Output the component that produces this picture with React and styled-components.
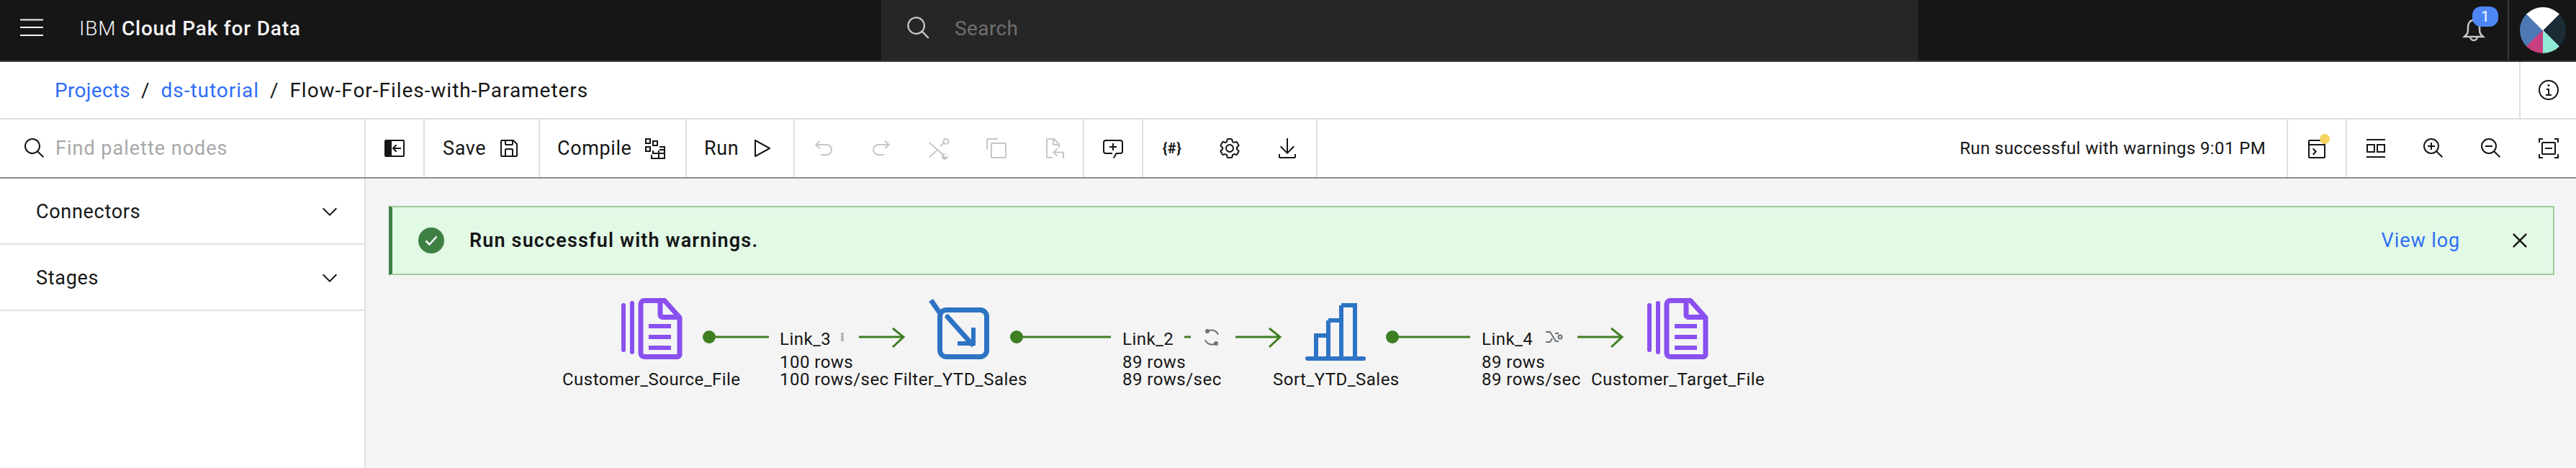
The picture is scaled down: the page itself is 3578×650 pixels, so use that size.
import React from "react";
import styled, { createGlobalStyle } from "styled-components";

const FONT = `Roboto, "Liberation Sans", sans-serif`;

const GlobalStyle = createGlobalStyle`
  html, body {
    margin: 0;
    padding: 0;
    background: #ffffff;
  }
  * {
    box-sizing: border-box;
  }
  body {
    font-family: ${FONT};
    color: #161616;
  }
`;

const ICONS = {
  menu: <path d="M0 3.5h32v2H0zM0 14h32v2H0zM0 25h32v2H0z" />,
  search: (
    <path d="M29 27.586l-7.552-7.552a11.018 11.018 0 1 0-1.414 1.414L27.586 29zM4 13a9 9 0 1 1 9 9 9.01 9.01 0 0 1-9-9z" />
  ),
  chevron: <path d="M16 22L6 12l1.4-1.4 8.6 8.6 8.6-8.6L26 12z" />,
  info: (
    <path d="M17 22v-8h-4v2h2v6h-3v2h8v-2zM16 8a1.5 1.5 0 1 0 1.5 1.5A1.5 1.5 0 0 0 16 8zM16 30a14 14 0 1 1 14-14 14 14 0 0 1-14 14zm0-26a12 12 0 1 0 12 12A12 12 0 0 0 16 4z" />
  ),
  collapse: (
    <path
      fillRule="evenodd"
      d="M4 4h24a2 2 0 0 1 2 2v20a2 2 0 0 1-2 2H4a2 2 0 0 1-2-2V6a2 2 0 0 1 2-2zm8 2v20h16V6zM18 10.6l1.4 1.4-3 3H25v2h-8.6l3 3-1.4 1.4-5.4-5.4z"
    />
  ),
  save: (
    <path d="M27.71 9.29l-5-5A1 1 0 0 0 22 4H6a2 2 0 0 0-2 2v20a2 2 0 0 0 2 2h20a2 2 0 0 0 2-2V10a1 1 0 0 0-.29-.71zM12 6h8v4h-8zm8 20h-8v-8h8zm2 0v-8a2 2 0 0 0-2-2h-8a2 2 0 0 0-2 2v8H6V6h4v4a2 2 0 0 0 2 2h8a2 2 0 0 0 2-2V6.41l4 4V26z" />
  ),
  compile: (
    <path
      fillRule="evenodd"
      d="M2 2h8v8H2zm2 2v4h4V4zM12 5h8v8h-8zm2 2v4h4V7zM2 13h8v8H2zm2 2v4h4v-4zM22 13h8v18H10v-6h2v-6h10zm-8 6v3h6v-3zm8 0v3h6v-3zm0-4v2h6v-2zm-10 12v2h8v-5h-8zm10-3v5h6v-5zm-10 0z"
    />
  ),
  play: (
    <path d="M7 28a1 1 0 0 1-1-1V5a1 1 0 0 1 1.482-.876l20 11a1 1 0 0 1 0 1.752l-20 11A1 1 0 0 1 7 28zM8 6.69v18.62L24.925 16z" />
  ),
  undo: (
    <path d="M20 10H7.815l3.587-3.586L10 5l-6 6 6 6 1.402-1.415L7.818 12H20a6 6 0 0 1 0 12h-8v2h8a8 8 0 0 0 0-16z" />
  ),
  redo: (
    <path d="M12 10h12.185l-3.587-3.586L22 5l6 6-6 6-1.402-1.415L24.182 12H12a6 6 0 0 0 0 12h8v2h-8a8 8 0 0 1 0-16z" />
  ),
  cut: (
    <path
      fillRule="evenodd"
      d="M26 2a4.5 4.5 0 1 1-2.9 7.9L18.6 14l-1.6-1.3 4.8-4.3A4.5 4.5 0 0 1 26 2zm0 2a2.5 2.5 0 1 0 0 5 2.5 2.5 0 0 0 0-5zM3.3 7.2l18.5 16.4A4.5 4.5 0 1 1 20.5 25L2 8.7zM26 23a2.5 2.5 0 1 0 0 5 2.5 2.5 0 0 0 0-5zM12.4 18.4l1.5 1.4-10.6 9.3L2 27.6z"
    />
  ),
  copy: (
    <path d="M28 10v18H10V10h18m0-2H10a2 2 0 0 0-2 2v18a2 2 0 0 0 2 2h18a2 2 0 0 0 2-2V10a2 2 0 0 0-2-2zM4 18H2V4a2 2 0 0 1 2-2h14v2H4z" />
  ),
  paste: (
    <path d="M5 2h11.4L24 10v5h-2v-3h-6a2 2 0 0 1-2-2V4H7v24h7v2H7a2 2 0 0 1-2-2V4a2 2 0 0 1 2-2zm11 2.8V10h5zM20 15.6l1.4 1.4-3.6 3.6H28a2 2 0 0 1 2 2V30h-2v-7.4H17.8l3.6 3.6L20 27.6 14 21.6z" />
  ),
  comment: (
    <path d="M17.74 30L16 29l4-7h6a2 2 0 0 0 2-2V8a2 2 0 0 0-2-2H6a2 2 0 0 0-2 2v12a2 2 0 0 0 2 2h9v2H6a4 4 0 0 1-4-4V8a4 4 0 0 1 4-4h20a4 4 0 0 1 4 4v12a4 4 0 0 1-4 4h-4.84zM17 9h-2v4h-4v2h4v4h2v-4h4v-2h-4z" />
  ),
  settings: (
    <path d="M27 16.76c0-.25 0-.5 0-.76s0-.51 0-.77l1.92-1.68A2 2 0 0 0 29.3 11l-2.36-4a2 2 0 0 0-1.73-1 2 2 0 0 0-.64.1l-2.43.82a11.35 11.35 0 0 0-1.31-.75l-.51-2.52a2 2 0 0 0-2-1.61h-4.68a2 2 0 0 0-2 1.61l-.51 2.52a11.48 11.48 0 0 0-1.32.75l-2.38-.86A2 2 0 0 0 6.79 6a2 2 0 0 0-1.73 1L2.7 11a2 2 0 0 0 .41 2.51L5 15.24c0 .25 0 .5 0 .76s0 .51 0 .77l-1.89 1.68A2 2 0 0 0 2.7 21l2.36 4a2 2 0 0 0 1.73 1 2 2 0 0 0 .64-.1l2.43-.82a11.35 11.35 0 0 0 1.31.75l.51 2.52a2 2 0 0 0 2 1.61h4.72a2 2 0 0 0 2-1.61l.51-2.52a11.48 11.48 0 0 0 1.32-.75l2.42.82a2 2 0 0 0 .64.1 2 2 0 0 0 1.73-1l2.28-4a2 2 0 0 0-.41-2.51zM25.21 24l-3.43-1.16a8.86 8.86 0 0 1-2.71 1.57L18.36 28h-4.72l-.71-3.55a9.36 9.36 0 0 1-2.7-1.57L6.79 24l-2.36-4 2.72-2.4a8.9 8.9 0 0 1 0-3.13L4.43 12l2.36-4 3.43 1.16a8.86 8.86 0 0 1 2.71-1.57L13.64 4h4.72l.71 3.55a9.36 9.36 0 0 1 2.7 1.57L25.21 8l2.36 4-2.72 2.4a8.9 8.9 0 0 1 0 3.13L27.57 20zM16 22a6 6 0 1 1 6-6 5.94 5.94 0 0 1-6 6zm0-10a3.91 3.91 0 0 0-4 4 3.91 3.91 0 0 0 4 4 3.91 3.91 0 0 0 4-4 3.91 3.91 0 0 0-4-4z" />
  ),
  download: (
    <path d="M26 24v4H6v-4H4v4a2 2 0 0 0 2 2h20a2 2 0 0 0 2-2v-4zM26 14l-1.41-1.41L17 20.17V2h-2v18.17l-7.59-7.58L6 14l10 10 10-10z" />
  ),
  terminal: (
    <path
      fillRule="evenodd"
      d="M6 4h20a2 2 0 0 1 2 2v22a2 2 0 0 1-2 2H6a2 2 0 0 1-2-2V6a2 2 0 0 1 2-2zm0 2v4h20V6zm0 6v16h20V12zM10 17l1.4-1.4 4.6 4.9-4.6 4.9L10 24l3.2-3.5z"
    />
  ),
  layout: (
    <path
      fillRule="evenodd"
      d="M3 3h26v2H3zM3 27h26v2H3zM3 10h12v12H3zm2 2v8h8v-8zM17 10h12v12H17zm2 2v8h8v-8z"
    />
  ),
  zoomIn: (
    <path d="M18 12h-4V8h-2v4H8v2h4v4h2v-4h4zM21.448 20A10.856 10.856 0 0 0 24 13a11 11 0 1 0-11 11 10.856 10.856 0 0 0 7-2.552L27.586 29 29 27.586zM13 22a9 9 0 1 1 9-9 9.01 9.01 0 0 1-9 9z" />
  ),
  zoomOut: (
    <path d="M8 12h10v2H8zM21.448 20A10.856 10.856 0 0 0 24 13a11 11 0 1 0-11 11 10.856 10.856 0 0 0 7-2.552L27.586 29 29 27.586zM13 22a9 9 0 1 1 9-9 9.01 9.01 0 0 1-9 9z" />
  ),
  fit: (
    <path
      fillRule="evenodd"
      d="M2 2h6v2H4v4H2zM24 2h6v6h-2V4h-4zM2 24h2v4h4v2H2zM28 24h2v6h-6v-2h4zM8 7h16a2 2 0 0 1 2 2v14a2 2 0 0 1-2 2H8a2 2 0 0 1-2-2V9a2 2 0 0 1 2-2zm0 2v14h16V9zM11 15h10v2H11z"
    />
  ),
  close: (
    <path d="M24 9.4L22.6 8 16 14.6 9.4 8 8 9.4l6.6 6.6L8 22.6 9.4 24l6.6-6.6 6.6 6.6 1.4-1.4-6.6-6.6L24 9.4z" />
  ),
};

function Icon({ name, size = 32 }) {
  return (
    <svg width={size} height={size} viewBox="0 0 32 32" fill="currentColor" aria-hidden="true">
      {ICONS[name]}
    </svg>
  );
}

const Page = styled.div`
  width: 100%;
  height: 650px;
  overflow: hidden;
  display: flex;
  flex-direction: column;
  font-family: ${FONT};
`;

/* ---------- top bar ---------- */

const Header = styled.header`
  flex: 0 0 86px;
  display: flex;
  align-items: stretch;
  background: #161616;
  border-bottom: 2px solid #393939;
  color: #f4f4f4;
`;

const Brand = styled.div`
  flex: 0 0 1224px;
  display: flex;
  align-items: center;
  padding: 0 0 6px 28px;
  gap: 50px;
`;

const BrandName = styled.span`
  font-size: 28px;
  font-weight: 300;
  letter-spacing: 0.8px;
  b {
    font-weight: 500;
  }
`;

const HeaderSearch = styled.div`
  flex: 0 0 1440px;
  display: flex;
  align-items: center;
  gap: 32px;
  padding: 0 0 6px 34px;
  background: #262626;
  color: #c6c6c6;
`;

const HeaderSearchText = styled.span`
  font-size: 28px;
  color: #6f6f6f;
  letter-spacing: 0.4px;
`;

const HeaderRight = styled.div`
  flex: 1;
  display: flex;
  justify-content: flex-end;
`;

const Bell = styled.div`
  position: relative;
  flex: 0 0 92px;
  display: flex;
  align-items: center;
  justify-content: center;
  padding-right: 4px;
  color: #c6c6c6;
  border-right: 2px solid #393939;
`;

const Badge = styled.span`
  position: absolute;
  left: 41px;
  top: 9px;
  width: 36px;
  height: 28px;
  border-radius: 12px;
  background: #4d87f6;
  color: #ffffff;
  font-size: 21px;
  line-height: 28px;
  text-align: center;
`;

const AvatarCell = styled.div`
  flex: 0 0 93px;
  display: flex;
  align-items: center;
  padding-left: 15px;
`;

const Avatar = styled.div`
  width: 64px;
  height: 64px;
  border-radius: 50%;
  background: conic-gradient(
    #ffffff 0deg 45deg,
    #1b2c37 45deg 135deg,
    #8fe9d5 135deg 180deg,
    #c63f7f 180deg 225deg,
    #4f79b5 225deg 315deg,
    #ffffff 315deg 360deg
  );
`;

/* ---------- breadcrumb ---------- */

const BreadcrumbBar = styled.nav`
  flex: 0 0 80px;
  display: flex;
  align-items: stretch;
  justify-content: space-between;
  background: #ffffff;
  border-bottom: 2px solid #e0e0e0;
`;

const Crumbs = styled.div`
  display: flex;
  align-items: center;
  padding-left: 76px;
  font-size: 28px;
  letter-spacing: 0.96px;
`;

const CrumbLink = styled.a`
  color: #2f6df6;
  letter-spacing: ${(p) => p.$spacing || "0.96px"};
`;

const CrumbSlash = styled.span`
  margin: 0 15px;
`;

const InfoButton = styled.div`
  flex: 0 0 79px;
  display: flex;
  align-items: center;
  justify-content: center;
  border-left: 2px solid #e0e0e0;
`;

/* ---------- toolbar ---------- */

const Toolbar = styled.div`
  flex: 0 0 82px;
  display: flex;
  align-items: stretch;
  width: calc(100% + 2px);
  background: #ffffff;
  border-bottom: 2px solid #8d8d8d;
`;

const PaletteSearch = styled.div`
  flex: 0 0 508px;
  display: flex;
  align-items: center;
  padding-left: 32px;
  border-right: 2px solid #e0e0e0;
`;

const PaletteText = styled.span`
  margin-left: 13px;
  font-size: 27px;
  letter-spacing: 1px;
  color: #a8a8a8;
`;

const Group = styled.div`
  display: flex;
  align-items: stretch;
  border-right: 2px solid #e0e0e0;
`;

const IconButton = styled.div`
  flex: 0 0 80px;
  width: 80px;
  position: relative;
  display: flex;
  align-items: center;
  justify-content: center;
  color: ${(p) => (p.$disabled ? "#c6c6c6" : "#161616")};
`;

const TextButton = styled.div`
  display: flex;
  align-items: center;
  width: ${(p) => p.$width}px;
  padding-left: ${(p) => p.$pad}px;
  gap: ${(p) => p.$gap}px;
  font-size: 27px;
  letter-spacing: 0.6px;
`;

const HashGlyph = styled.span`
  font-size: 20px;
  font-weight: 700;
  letter-spacing: 0.5px;
`;

const Dot = styled.span`
  position: absolute;
  left: 44px;
  top: 20px;
  width: 14px;
  height: 14px;
  border-radius: 50%;
  background: #f6d35f;
`;

const Spacer = styled.div`
  flex: 1;
`;

const StatusText = styled.div`
  display: flex;
  align-items: center;
  padding-right: 29px;
  font-size: 24px;
  letter-spacing: 0.38px;
  border-right: 2px solid #e0e0e0;
`;

/* ---------- body ---------- */

const Body = styled.div`
  flex: 1;
  display: flex;
  min-height: 0;
`;

const Sidebar = styled.aside`
  flex: 0 0 508px;
  background: #ffffff;
  border-right: 2px solid #e0e0e0;
`;

const Section = styled.div`
  height: 92px;
  display: flex;
  align-items: center;
  justify-content: space-between;
  padding: 1px 32px 0 50px;
  font-size: 27px;
  letter-spacing: 0.7px;
  border-bottom: 2px solid #e0e0e0;
`;

const Main = styled.main`
  flex: 1;
  background: #f4f4f4;
  display: flex;
  flex-direction: column;
  min-width: 0;
`;

const Notification = styled.div`
  flex: 0 0 96px;
  margin: 38px 30px 0 32px;
  display: flex;
  align-items: center;
  background: #e2f9e6;
  border: 2px solid #9ccb9e;
  border-left: 5px solid #3e7f42;
  padding: 0 26px 0 36px;
`;

const NotificationTitle = styled.span`
  margin-left: 35px;
  font-size: 27px;
  font-weight: 600;
  letter-spacing: 1.15px;
`;

const ViewLog = styled.a`
  font-size: 27px;
  letter-spacing: 0.9px;
  color: #2f6df6;
  margin-left: auto;
  margin-right: 63px;
`;

const CloseButton = styled.div`
  display: flex;
`;

const FlowCanvas = styled.div`
  position: relative;
  flex: 1;
`;

const FlowDrawing = styled.svg`
  position: absolute;
  left: 0;
  top: 0;
`;

/* page coords minus the canvas origin (508, 382) */
const FlowText = styled.span`
  position: absolute;
  left: ${(p) => p.$x - 508}px;
  top: ${(p) => p.$y - 382}px;
  font-size: 24px;
  line-height: 28px;
  letter-spacing: 0.47px;
  white-space: nowrap;
`;

const GREEN = "#3f7f24";
const PURPLE = "#8a50f0";
const BLUE = "#2d74c4";

function FileNode({ x }) {
  return (
    <g transform={`translate(${x} 414)`} fill={PURPLE}>
      <rect x="0" y="7" width="6" height="68" rx="3" />
      <rect x="12" y="4" width="6" height="74" rx="3" />
      <path
        fill="none"
        stroke={PURPLE}
        strokeWidth="7"
        strokeLinejoin="round"
        d="M35 3.5H32a5 5 0 0 0-5 5v68a5 5 0 0 0 5 5h46a3 3 0 0 0 3-3V27L60 3.5zM54 3.5v20a3 3 0 0 0 3 3h24"
      />
      <rect x="38" y="36" width="31" height="6" />
      <rect x="38" y="51" width="31" height="6" />
      <rect x="38" y="66" width="31" height="6" />
    </g>
  );
}

function LinkLine({ from, to, tip }) {
  return (
    <g fill="none" stroke={GREEN}>
      <circle cx={from} cy="86" r="9" fill={GREEN} stroke="none" />
      <path strokeWidth="3" d={`M${from} 86H${to}`} />
      <path strokeWidth="3" d={`M${tip - 62} 86H${tip}M${tip - 15} 74L${tip} 86L${tip - 15} 100`} />
    </g>
  );
}

function FlowArt() {
  return (
    <FlowDrawing width="3070" height="268" viewBox="508 382 3070 268">
      <FileNode x={863} />
      <FileNode x={2288} />

      {/* filter node */}
      <g fill="none" stroke={BLUE} strokeWidth="7">
        <rect x="1305.5" y="430.5" width="65" height="65" rx="9" />
        <path d="M1293 417L1305 434" />
        <path strokeLinecap="round" d="M1316 440L1350 478" />
        <path strokeWidth="6" d="M1330 477H1352V455" />
      </g>

      {/* sort node */}
      <g fill="none" stroke={BLUE} strokeWidth="6">
        <path d="M1828 496V466H1845V496M1845 445H1863V496M1845 466V445M1863 424H1882V496M1863 445V424" />
        <rect x="1813" y="495" width="84" height="6" rx="3" fill={BLUE} stroke="none" />
      </g>

      {/* links, y relative to the 382 row */}
      <g transform="translate(0 382)">
        <LinkLine from={985} to={1068} tip={1255} />
        <LinkLine from={1412} to={1543} tip={1778} />
        <LinkLine from={1934} to={2042} tip={2253} />
        <path d="M1645 86H1654" stroke={GREEN} strokeWidth="3" />
      </g>

      {/* decorator icons on the links */}
      <g fill="none" stroke="#9aa3aa" strokeWidth="1.5">
        <circle cx="1170" cy="464" r="1.2" />
        <circle cx="1170" cy="468" r="1.2" />
        <circle cx="1170" cy="472" r="1.2" />
      </g>
      <g fill="none" stroke="#697077" strokeWidth="2">
        <path d="M1676 461A10 10 0 0 1 1692 465" />
        <path d="M1690 476A10 10 0 0 1 1674 472" />
        <circle cx="1677" cy="460" r="2" />
        <circle cx="1689" cy="477" r="2" />
      </g>
      <g fill="none" stroke="#697077" strokeWidth="2">
        <path d="M2147 461h6l8 13h4M2147 475h6l3-5M2160 463h5" />
        <circle cx="2167" cy="468" r="2.5" />
      </g>
    </FlowDrawing>
  );
}

const NODE_LABELS = [
  { x: 781, text: "Customer_Source_File" },
  { x: 1241, text: "Filter_YTD_Sales" },
  { x: 1768, text: "Sort_YTD_Sales" },
  { x: 2210, text: "Customer_Target_File" },
];

const LINK_LABELS = [
  { x: 1083, name: "Link_3", rows: "100 rows", rate: "100 rows/sec" },
  { x: 1559, name: "Link_2", rows: "89 rows", rate: "89 rows/sec" },
  { x: 2058, name: "Link_4", rows: "89 rows", rate: "89 rows/sec" },
];

export default function App() {
  return (
    <Page>
      <GlobalStyle />
      <Header>
        <Brand>
          <Icon name="menu" />
          <BrandName>
            IBM <b>Cloud Pak for Data</b>
          </BrandName>
        </Brand>
        <HeaderSearch>
          <Icon name="search" size={36} />
          <HeaderSearchText>Search</HeaderSearchText>
        </HeaderSearch>
        <HeaderRight>
          <Bell>
            <svg width="32" height="36" viewBox="0 0 32 36" fill="none" stroke="currentColor" strokeWidth="2.5" aria-hidden="true">
              <path d="M3 27h26l-2-2c-3-3-3-5-3-11 0-6-3-10-8-10s-8 4-8 10c0 6 0 8-3 11zM11 27a5 5 0 0 0 10 0" />
            </svg>
            <Badge>1</Badge>
          </Bell>
          <AvatarCell>
            <Avatar />
          </AvatarCell>
        </HeaderRight>
      </Header>

      <BreadcrumbBar>
        <Crumbs>
          <CrumbLink $spacing="0.3px">Projects</CrumbLink>
          <CrumbSlash>/</CrumbSlash>
          <CrumbLink>ds-tutorial</CrumbLink>
          <CrumbSlash>/</CrumbSlash>
          <span>Flow-For-Files-with-Parameters</span>
        </Crumbs>
        <InfoButton>
          <Icon name="info" />
        </InfoButton>
      </BreadcrumbBar>

      <Toolbar>
        <PaletteSearch>
          <Icon name="search" />
          <PaletteText>Find palette nodes</PaletteText>
        </PaletteSearch>
        <Group>
          <IconButton>
            <Icon name="collapse" />
          </IconButton>
        </Group>
        <Group>
          <TextButton $width={158} $pad={25} $gap={16}>
            Save
            <Icon name="save" />
          </TextButton>
        </Group>
        <Group>
          <TextButton $width={202} $pad={24} $gap={17}>
            Compile
            <Icon name="compile" />
          </TextButton>
        </Group>
        <Group>
          <TextButton $width={148} $pad={24} $gap={16}>
            Run
            <Icon name="play" />
          </TextButton>
        </Group>
        <Group>
          <IconButton $disabled>
            <Icon name="undo" />
          </IconButton>
          <IconButton $disabled>
            <Icon name="redo" />
          </IconButton>
          <IconButton $disabled>
            <Icon name="cut" />
          </IconButton>
          <IconButton $disabled>
            <Icon name="copy" />
          </IconButton>
          <IconButton $disabled>
            <Icon name="paste" />
          </IconButton>
        </Group>
        <Group>
          <IconButton>
            <Icon name="comment" />
          </IconButton>
        </Group>
        <Group>
          <IconButton>
            <HashGlyph>{"{#}"}</HashGlyph>
          </IconButton>
          <IconButton>
            <Icon name="settings" />
          </IconButton>
          <IconButton>
            <Icon name="download" />
          </IconButton>
        </Group>
        <Spacer />
        <StatusText>Run successful with warnings 9:01 PM</StatusText>
        <Group>
          <IconButton>
            <Icon name="terminal" />
            <Dot />
          </IconButton>
        </Group>
        <IconButton>
          <Icon name="layout" />
        </IconButton>
        <IconButton>
          <Icon name="zoomIn" />
        </IconButton>
        <IconButton>
          <Icon name="zoomOut" />
        </IconButton>
        <IconButton>
          <Icon name="fit" />
        </IconButton>
      </Toolbar>

      <Body>
        <Sidebar>
          <Section>
            Connectors
            <Icon name="chevron" />
          </Section>
          <Section>
            Stages
            <Icon name="chevron" />
          </Section>
        </Sidebar>
        <Main>
          <Notification>
            <svg width="36" height="36" viewBox="0 0 36 36" aria-hidden="true">
              <circle cx="18" cy="18" r="18" fill="#3e7f42" />
              <path d="M10.5 18.5l5 5 10-11" fill="none" stroke="#ffffff" strokeWidth="2.5" />
            </svg>
            <NotificationTitle>Run successful with warnings.</NotificationTitle>
            <ViewLog>View log</ViewLog>
            <CloseButton>
              <Icon name="close" size={40} />
            </CloseButton>
          </Notification>
          <FlowCanvas>
            <FlowArt />
            {NODE_LABELS.map((node) => (
              <FlowText key={node.text} $x={node.x} $y={513}>
                {node.text}
              </FlowText>
            ))}
            {LINK_LABELS.map((link) => (
              <React.Fragment key={link.name}>
                <FlowText $x={link.x} $y={457}>
                  {link.name}
                </FlowText>
                <FlowText $x={link.x} $y={489}>
                  {link.rows}
                </FlowText>
                <FlowText $x={link.x} $y={513}>
                  {link.rate}
                </FlowText>
              </React.Fragment>
            ))}
          </FlowCanvas>
        </Main>
      </Body>
    </Page>
  );
}
